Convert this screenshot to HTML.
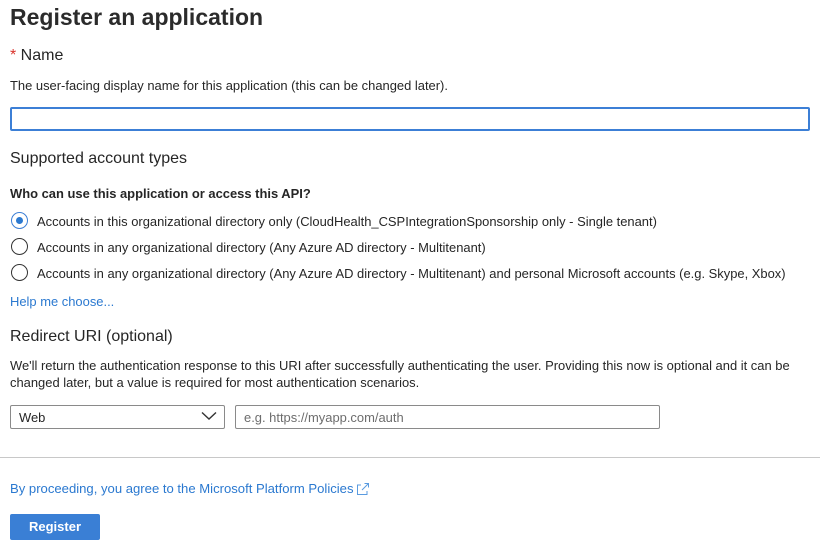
<!DOCTYPE html><html><head><style>
body{margin:0;width:820px;height:549px;background:#fff;font-family:"Liberation Sans",sans-serif;color:#262626;position:relative;overflow:hidden}
.a{position:absolute;white-space:nowrap}
.t{font-size:12.95px}
.h{font-size:16px}
.r{position:absolute;left:11px;width:17px;height:17px;border:1.3px solid #333;border-radius:50%;box-sizing:border-box}
.lnk{color:#2b79d0}
</style></head><body>
<div class="a" style="left:10px;top:4px;font-size:23px;font-weight:bold;color:#2b2b2b">Register an application</div>
<div class="a h" style="left:10px;top:47px"><span style="color:#d9322b">*</span> Name</div>
<div class="a t" style="left:10px;top:78px">The user-facing display name for this application (this can be changed later).</div>
<div class="a" style="left:10px;top:107px;width:800px;height:24px;border:2px solid #3c7fd6;border-radius:2px;box-sizing:border-box"></div>
<div class="a h" style="left:10px;top:150px">Supported account types</div>
<div class="a t" style="left:10px;top:186px;font-weight:bold">Who can use this application or access this API?</div>
<div class="r" style="top:212px;border-color:#3c7fd6"><div style="position:absolute;left:3.5px;top:3.5px;width:7.5px;height:7.5px;border-radius:50%;background:#2b79d0"></div></div>
<div class="r" style="top:238px"></div>
<div class="r" style="top:264px"></div>
<div class="a t" style="left:37px;top:214px">Accounts in this organizational directory only (CloudHealth_CSPIntegrationSponsorship only - Single tenant)</div>
<div class="a t" style="left:37px;top:240px">Accounts in any organizational directory (Any Azure AD directory - Multitenant)</div>
<div class="a t" style="left:37px;top:266px">Accounts in any organizational directory (Any Azure AD directory - Multitenant) and personal Microsoft accounts (e.g. Skype, Xbox)</div>
<div class="a t lnk" style="left:10px;top:294px">Help me choose...</div>
<div class="a h" style="left:10px;top:328px">Redirect URI (optional)</div>
<div class="a t" style="left:10px;top:358px">We'll return the authentication response to this URI after successfully authenticating the user. Providing this now is optional and it can be</div>
<div class="a t" style="left:10px;top:375px">changed later, but a value is required for most authentication scenarios.</div>
<div class="a" style="left:10px;top:405px;width:215px;height:24px;border:1px solid #8a8a8a;border-radius:2px;box-sizing:border-box"></div>
<div class="a t" style="left:19px;top:410px">Web</div>
<svg class="a" style="left:201px;top:411px" width="16" height="10"><path d="M1 1.5 L8 8 L15 1.5" fill="none" stroke="#333" stroke-width="1.4"/></svg>
<div class="a" style="left:235px;top:405px;width:425px;height:24px;border:1px solid #8a8a8a;border-radius:2px;box-sizing:border-box"></div>
<div class="a t" style="left:244px;top:410px;color:#6d6d6d">e.g. https://myapp.com/auth</div>
<div class="a" style="left:0;top:457px;width:820px;height:1px;background:#c8c8c8"></div>
<div class="a t lnk" style="left:10px;top:481px;font-size:13.1px">By proceeding, you agree to the Microsoft Platform Policies</div>
<svg class="a" style="left:356px;top:482px" width="14" height="14"><path d="M5 3H1.5V12.5H11V9" fill="none" stroke="#5a9be0" stroke-width="1"/><path d="M6 8L12.5 1.5M8.5 1.5H12.5V5.5" fill="none" stroke="#5a9be0" stroke-width="1"/></svg>
<div class="a" style="left:10px;top:514px;width:90px;height:26px;background:#3a7fd5;border-radius:2px;color:#fff;font-size:13px;font-weight:bold;text-align:center;line-height:26px">Register</div>
</body></html>
